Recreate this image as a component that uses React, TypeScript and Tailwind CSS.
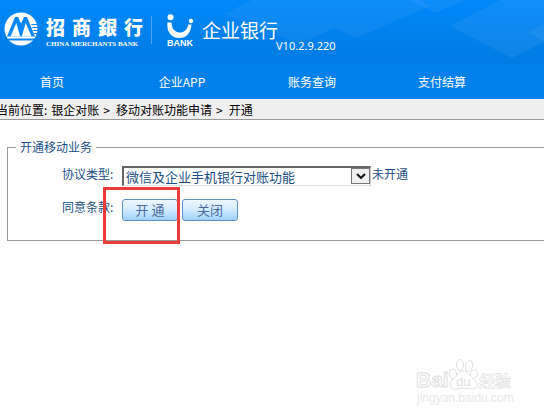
const navLinks = [
  { label: '首页', href: '#home' },
  { label: '企业APP', href: '#app' },
  { label: '账务查询', href: '#accounts' },
  { label: '支付结算', href: '#payment' },
];

const crumbs = ['银企对账', '移动对账功能申请', '开通'];

function BankEmblem() {
  return (
    <svg viewBox="0 0 34 34" className="h-[34px] w-[34px] shrink-0" aria-hidden="true">
      <circle cx="17" cy="17" r="16.5" fill="#fff" />
      <g fill="#0a86f6">
        <path d="M3 24.5 L11 5 H14 L17 11.5 L20 5 H23 L31 24.5 Z" />
        <path d="M3.5 26.5 H30.5 L29.5 28.5 H4.5 Z" />
        <path d="M27 12 H33 V13 H27.5 Z M28 15 H34 V16 H28.5 Z M29 18 H34 V19 H29.5 Z M30 21 H33.5 V22 H30.5 Z" />
      </g>
      <path d="M6.5 24.5 L12.3 11 L16.2 24.5 Z M17.8 24.5 L21.7 11 L27.5 24.5 Z" fill="#fff" />
    </svg>
  );
}

function UBankMark() {
  return (
    <div className="flex w-7 flex-col items-center">
      <svg viewBox="0 0 28 25" className="h-[25px] w-7" aria-hidden="true">
        <circle cx="4.5" cy="3.2" r="3" fill="#fff" />
        <circle cx="25" cy="7" r="2.2" fill="#fff" />
        <path d="M1.4 8.5 H5.6 C5.6 14 8 18 13.5 18.6 C18.6 18.6 21.2 15.5 22.4 10.5 H25.4 C25.2 18 21 24 13.5 24 C5 24 .6 18 1.4 8.5 Z" fill="#fff" />
      </svg>
      <span className="font-['Liberation_Sans',sans-serif] text-[9px] leading-[8px] font-bold">BANK</span>
    </div>
  );
}

function Header() {
  return (
    <header className="relative h-16 overflow-hidden bg-linear-to-b from-[#0088fa] to-[#007be2] text-white">
      <svg viewBox="0 0 544 64" preserveAspectRatio="xMidYMid slice" className="absolute inset-0 h-full w-full" aria-hidden="true">
        <g fill="#fff">
          <path d="M224 14 L252 0 H420 L430 6 L356 38 L335 28 L300 44 Z" opacity=".05" />
          <path d="M410 0 H465 L435 13 Z" opacity=".05" />
          <path d="M450 26 L500 0 H544 V42 L512 58 Z" opacity=".06" />
          <path d="M528 32 L544 24 V42 Z" opacity=".05" />
        </g>
      </svg>
      <div className="relative flex items-start pt-3 pl-1">
        <BankEmblem />
        <div className="ml-2 w-[97px] pt-1">
          <div className="flex justify-between text-[19px] leading-[22px] font-black">
            <span>招</span>
            <span>商</span>
            <span>銀</span>
            <span>行</span>
          </div>
          <div className="mt-0.5 font-['Liberation_Serif',serif] text-[7px] leading-[8px] font-bold whitespace-nowrap">
            CHINA MERCHANTS BANK
          </div>
        </div>
        <div className="mt-1 ml-2 h-7 w-px bg-white/30" />
        <div className="ml-[14px] pt-0.5">
          <UBankMark />
        </div>
        <span className="ml-2 pt-1.5 text-[19px] leading-6">企业银行</span>
        <span className="-ml-0.5 pt-7 font-['Noto_Sans',sans-serif] text-[11px] leading-3">V10.2.9.220</span>
      </div>
    </header>
  );
}

function Watermark() {
  return (
    <svg viewBox="0 0 100 50" className="absolute right-7 bottom-2 h-[50px] w-[100px]" aria-hidden="true">
      <g fill="#fff" stroke="#e0e0e0" strokeWidth="1">
        <text x="0" y="30" fontFamily="Liberation Sans, sans-serif" fontSize="21" fontWeight="700">Bai</text>
        <ellipse cx="37" cy="17" rx="3.5" ry="5" transform="rotate(-15 37 17)" />
        <ellipse cx="44" cy="8" rx="3.5" ry="5.5" />
        <ellipse cx="53" cy="9" rx="3.5" ry="5.5" transform="rotate(15 53 9)" />
        <ellipse cx="58" cy="17" rx="3.5" ry="4.5" transform="rotate(25 58 17)" />
        <path d="M47 14 C52 14 54 20 59 23 C64 28 60 33 55 32 C50 31 45 31 41 32 C35 33 32 28 36 23 C41 20 42 14 47 14 Z" />
      </g>
      <text x="40" y="29" fill="#e0e0e0" fontFamily="Liberation Sans, sans-serif" fontSize="13">du</text>
      <text x="63" y="30" fill="#fff" stroke="#dcdcdc" strokeWidth=".6" fontFamily="Noto Sans CJK SC, sans-serif" fontSize="16" fontWeight="700">经验</text>
      <text x="1" y="45" fill="#e8e8e8" fontFamily="Liberation Sans, sans-serif" fontSize="12">jingyan.baidu.com</text>
    </svg>
  );
}

function ActionButton({ label }: { label: string }) {
  return (
    <button
      type="button"
      className="h-[22px] w-14 rounded-[3px] border border-[#5f93c4] bg-linear-to-b from-[#eef8ff] via-[#d2eaff] to-[#9fd0ff] text-[13px] leading-5 text-[#4c6a9c]"
    >
      {label}
    </button>
  );
}

export default function App() {
  return (
    <div className="relative min-h-screen overflow-hidden bg-white font-['Noto_Sans_CJK_SC',sans-serif] text-xs">
      <Header />

      {/* Main menu */}
      <nav className="flex h-[35px] items-center bg-[#0080ec] text-white" aria-label="主菜单">
        {navLinks.map((link) => (
          <a key={link.label} href={link.href} className="w-[130px] pr-[26px] text-center leading-9">
            {link.label}
          </a>
        ))}
      </nav>

      {/* Breadcrumb */}
      <div className="-ml-1 flex h-[21px] items-center gap-1 border-b border-[#999] bg-[#efefef] pt-0.5 whitespace-nowrap text-black">
        <span>当前位置:</span>
        {crumbs.map((crumb, i) => (
          <span key={crumb} className="flex gap-1.5">
            {i > 0 && <span>&gt;</span>}
            {crumb}
          </span>
        ))}
      </div>

      <form className="pt-5 pl-[7px] text-[#1c4f86]">
        <fieldset className="relative border border-r-0 border-[#999] pb-[19px] pl-[54px]">
          <legend className="-ml-[46px] px-1 leading-[14px]">开通移动业务</legend>
          <div className="flex items-start pt-3">
            <label htmlFor="protocol" className="w-15 leading-4">协议类型:</label>
            <div className="relative">
              <select
                id="protocol"
                className="block h-5 w-[249px] appearance-none border-t-2 border-r border-b border-l-2 border-t-[#666] border-r-[#ccc] border-b-[#ddd] border-l-[#666] bg-white pl-0.5 text-[13px] leading-4"
              >
                <option>微信及企业手机银行对账功能</option>
              </select>
              <span className="pointer-events-none absolute top-0.5 right-px flex h-4 w-[19px] items-center justify-center border border-[#777] bg-[#f0f0f0]">
                <svg viewBox="0 0 10 6" className="h-1.5 w-2.5" fill="none" stroke="#111" strokeWidth="2" aria-hidden="true">
                  <path d="M1 1 L5 5 L9 1" />
                </svg>
              </span>
            </div>
            <span className="ml-px leading-4">未开通</span>
          </div>
          <div className="flex items-start pt-[13px]">
            <span className="w-15 leading-4">同意条款:</span>
            <div className="flex gap-1">
              <ActionButton label="开 通" />
              <ActionButton label="关闭" />
            </div>
          </div>
          {/* Highlight over the confirm button */}
          <div className="pointer-events-none absolute -bottom-1 left-[95px] h-[57px] w-[77px] border-[3px] border-[#ed3b3b]" />
        </fieldset>
      </form>

      <Watermark />
    </div>
  );
}
